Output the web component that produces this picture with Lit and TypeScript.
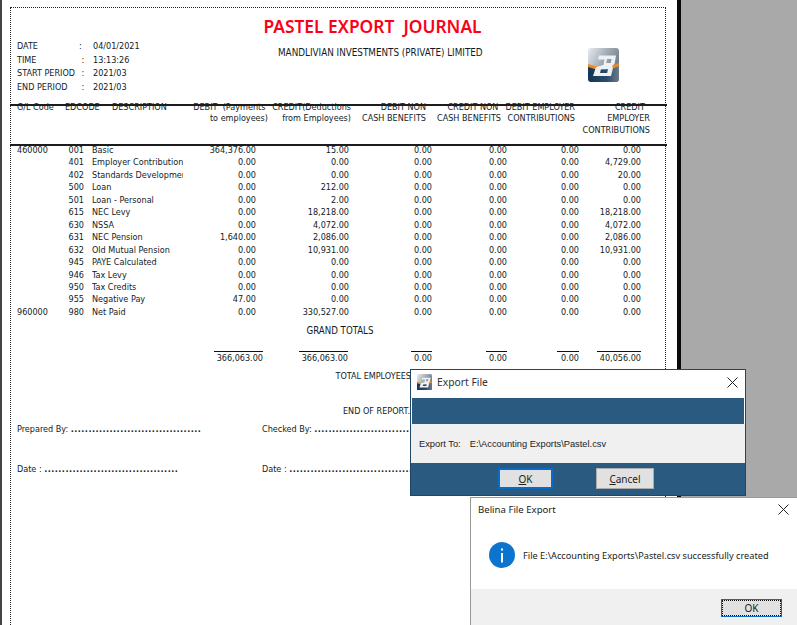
import { LitElement, html, css } from "lit";
import { customElement } from "lit/decorators.js";

type Row = [string, string, string, string, string, string, string, string, string];
const ROWS: Row[] = [
  ["460000", "001", "Basic", "364,376.00", "15.00", "0.00", "0.00", "0.00", "0.00"],
  ["", "401", "Employer Contribution", "0.00", "0.00", "0.00", "0.00", "0.00", "4,729.00"],
  ["", "402", "Standards Development Levy", "0.00", "0.00", "0.00", "0.00", "0.00", "20.00"],
  ["", "500", "Loan", "0.00", "212.00", "0.00", "0.00", "0.00", "0.00"],
  ["", "501", "Loan - Personal", "0.00", "2.00", "0.00", "0.00", "0.00", "0.00"],
  ["", "615", "NEC Levy", "0.00", "18,218.00", "0.00", "0.00", "0.00", "18,218.00"],
  ["", "630", "NSSA", "0.00", "4,072.00", "0.00", "0.00", "0.00", "4,072.00"],
  ["", "631", "NEC Pension", "1,640.00", "2,086.00", "0.00", "0.00", "0.00", "2,086.00"],
  ["", "632", "Old Mutual Pension", "0.00", "10,931.00", "0.00", "0.00", "0.00", "10,931.00"],
  ["", "945", "PAYE Calculated", "0.00", "0.00", "0.00", "0.00", "0.00", "0.00"],
  ["", "946", "Tax Levy", "0.00", "0.00", "0.00", "0.00", "0.00", "0.00"],
  ["", "950", "Tax Credits", "0.00", "0.00", "0.00", "0.00", "0.00", "0.00"],
  ["", "955", "Negative Pay", "47.00", "0.00", "0.00", "0.00", "0.00", "0.00"],
  ["960000", "980", "Net Paid", "0.00", "330,527.00", "0.00", "0.00", "0.00", "0.00"],
];
/* value, underline width, gap before it */
const TOTALS: [string, number, number][] = [
  ["366,063.00", 49, 203],
  ["366,063.00", 49, 36],
  ["0.00", 21, 63],
  ["0.00", 21, 54],
  ["0.00", 22, 50],
  ["40,056.00", 44, 18],
];

const logo = (w: number) => html`<svg width=${w} height=${w * 1.1} viewBox="0 0 31 34">
  <defs>
    <linearGradient id="lg" x1="0" y1="0" x2="1" y2="0.6">
      <stop offset="0" stop-color="#e9ecef" /><stop offset="0.5" stop-color="#a3adb7" /><stop offset="1" stop-color="#66757f" />
    </linearGradient>
    <linearGradient id="ld" x1="0" y1="0" x2="1" y2="0">
      <stop offset="0" stop-color="#163556" /><stop offset="0.6" stop-color="#2a4a68" /><stop offset="1" stop-color="#6c7c8a" />
    </linearGradient>
  </defs>
  <rect width="31" height="34" rx="3" fill="url(#lg)" />
  <path d="M0 18 Q15 24 31 17 V31 a3 3 0 0 1 -3 3 H3 a3 3 0 0 1 -3 -3Z" fill="url(#ld)" />
  <path d="M0 16 Q15 22 31 15 V18 Q15 25 0 19Z" fill="#f08a24" />
  <path fill-rule="evenodd" fill="#eef1f4" d="M11 7.5 H28 L26.5 16 L24 18 L25 20 L23 28 H5 L8 19 L15.5 17 L16.5 11.5 H10Z M19 11 H23.5 L22.8 15 H18.2Z M13 21 H20 L19.2 25 H12Z" />
</svg>`;

@customElement("app-root")
export class AppRoot extends LitElement {
  static styles = css`
    :host { display: block; width: 797px; height: 625px; overflow: hidden; position: relative; background: #a9a9a9; font-family: "DejaVu Sans Condensed", "DejaVu Sans", sans-serif; }
    .paper { box-sizing: border-box; width: 681px; height: 625px; background: #fff; border-left: 2px solid #444; border-right: 4px solid #0a0a0a; padding: 7px 0 0 8px; }
    .frame { box-sizing: border-box; width: 656px; height: 640px; border: 1px dotted #222; color: #111b27; font-size: 9px; line-height: 12px; display: flex; flex-direction: column; }
    .title { color: #fb0018; font-family: "Noto Sans", sans-serif; font-size: 17.4px; font-weight: 600; line-height: 22px; text-align: center; white-space: pre; margin: 7px 0 0 69px; }
    .top { display: grid; grid-template-columns: 240px 205px 1fr; height: 64px; padding: 3px 0 0 6px; }
    .meta { display: grid; grid-template-columns: 62px 14px 1fr; grid-auto-rows: 13.6px; white-space: pre; }
    .company { font-size: 9.8px; text-align: center; padding-top: 7px; margin-left: 21px; white-space: nowrap; }
    .logo { padding: 8px 0 0 126px; }
    .rule { height: 2px; background: #1c1c1c; width: 657px; margin-left: -1px; position: relative; z-index: 1; }
    .head { display: grid; grid-template-columns: 6px 48px 47px 60px 96px 83px 75px 75px 74px 75px; height: 42px; line-height: 11.4px; margin-top: -4px; overflow: hidden; white-space: pre; }
    .row { display: grid; grid-template-columns: 6px 43px 24px 8px 91px 73px 93px 83px 75px 72px 62px; height: 12.46px; line-height: 12.46px; white-space: nowrap; }
    .r { text-align: right; }
    .desc { overflow: hidden; }
    .body { margin-top: -2px; }
    .grand { font-size: 9.6px; text-align: center; margin-top: 7px; width: 658px; height: 26px; }
    .tot { display: flex; }
    .v { border-top: 1px solid #111; line-height: 12px; text-align: right; white-space: nowrap; }
    .employees { margin-top: 6px; padding-right: 254px; text-align: right; }
    .eor { margin-top: 23px; padding-right: 255px; text-align: right; }
    .sign { display: grid; grid-template-columns: 245px 1fr; padding-left: 6px; margin-top: 6px; white-space: nowrap; }
    .sign.second { margin-top: 28px; }
    .dots { letter-spacing: 0.45px; font-weight: 700; }
    .win { position: absolute; box-sizing: border-box; background: #fff; color: #222; }
    .export { left: 410px; top: 369px; width: 336px; height: 127px; border: 1px solid #1f4868; display: flex; flex-direction: column; }
    .tbar { display: flex; align-items: center; flex: none; }
    .export .tbar { height: 24px; padding: 0 7px 0 6px; gap: 5px; font: 10.3px "Noto Sans", sans-serif; color: #333; }
    .grow { flex: 1; }
    .band { height: 26px; margin: 4px 1px 0 1px; background: #2a5a80; flex: none; }
    .etext { height: 39px; background: #f0f0f0; display: flex; align-items: center; gap: 9px; padding-left: 8px; font: 9.3px "Liberation Sans", sans-serif; flex: none; white-space: pre; }
    .ebar { flex: 1; background: #2a5a80; display: flex; gap: 43px; padding: 5px 0 0 87px; }
    .btn { box-sizing: border-box; height: 21px; background: #e1e1e1; border: 1px solid #adadad; display: flex; align-items: center; justify-content: center; font: 10px "Noto Sans", sans-serif; color: #222; }
    .ok { width: 55px; border: 2px solid #0a6cc4; }
    .cancel { width: 58px; }
    .msg { left: 470px; top: 497px; width: 327px; height: 128px; border-left: 1px solid #999; border-top: 1px solid #999; display: flex; flex-direction: column; }
    .msg .tbar { height: 23px; padding: 0 8px 0 7px; font: 9.6px "Noto Sans", sans-serif; color: #222; }
    .mbody { height: 68px; display: flex; align-items: center; gap: 8px; padding-left: 18px; font: 9.2px "Noto Sans", sans-serif; color: #222; flex: none; }
    .mfoot { flex: 1; background: #f0f0f0; padding: 10px 0 0 250px; }
    .mok { box-sizing: border-box; width: 61px; height: 18px; background: #e1e1e1; border: 1px solid #0a6cc4; outline: 1px dotted #111; outline-offset: -2px; display: flex; align-items: center; justify-content: center; font: 10px "Noto Sans", sans-serif; color: #222; }
  `;

  private x() {
    return html`<svg width="11" height="11" viewBox="0 0 11 11"><path d="M.5.5l10 10M10.5.5l-10 10" stroke="#222" stroke-width="1" fill="none" /></svg>`;
  }

  render() {
    return html`
      <div class="paper">
        <div class="frame">
          <div class="title">PASTEL EXPORT  JOURNAL</div>
          <div class="top">
            <div class="meta">
              <span>DATE</span><span>:</span><span>04/01/2021</span>
              <span>TIME</span><span> :</span><span>13:13:26</span>
              <span>START PERIOD</span><span> :</span><span>2021/03</span>
              <span>END PERIOD</span><span> :</span><span>2021/03</span>
            </div>
            <div class="company">MANDLIVIAN INVESTMENTS (PRIVATE) LIMITED</div>
            <div class="logo">${logo(31)}</div>
          </div>
          <div class="rule"></div>
          <div class="head">
            <span></span><span>G/L Code</span><span>EDCODE</span><span>DESCRIPTION</span>
            <span class="r">DEBIT  (Payments 
to employees)</span>
            <span class="r">CREDIT(Deductions
from Employees)</span>
            <span class="r">DEBIT NON
CASH BENEFITS</span>
            <span class="r">CREDIT NON 
CASH BENEFITS</span>
            <span class="r">DEBIT EMPLOYER
CONTRIBUTIONS</span>
            <span class="r">CREDIT  
EMPLOYER
CONTRIBUTIONS</span>
          </div>
          <div class="rule"></div>
          <div class="body">
            ${ROWS.map((r) => html`<div class="row">
              <span></span><span>${r[0]}</span><span class="r">${r[1]}</span><span></span>
              <span class="desc">${r[2]}</span>
              ${r.slice(3).map((v) => html`<span class="r">${v}</span>`)}
            </div>`)}
          </div>
          <div class="grand">GRAND TOTALS</div>
          <div class="tot">
            ${TOTALS.map(([v, w, gap]) => html`<div class="v" style="width:${w}px;margin-left:${gap}px">${v}</div>`)}
          </div>
          <div class="employees">TOTAL EMPLOYEES</div>
          <div class="eor">END OF REPORT.</div>
          <div class="sign">
            <span>Prepared By: <span class="dots">.....................................</span></span>
            <span>Checked By: <span class="dots">.....................................</span></span>
          </div>
          <div class="sign second">
            <span>Date : <span class="dots">......................................</span></span>
            <span>Date : <span class="dots">......................................</span></span>
          </div>
        </div>
      </div>

      <div class="win export">
        <div class="tbar">
          ${logo(15)}
          <span>Export File</span><span class="grow"></span>${this.x()}
        </div>
        <div class="band"></div>
        <div class="etext"><span>Export To:</span><span>E:\\Accounting Exports\\Pastel.csv</span></div>
        <div class="ebar">
          <div class="btn ok"><span><u>O</u>K</span></div>
          <div class="btn cancel"><span><u>C</u>ancel</span></div>
        </div>
      </div>

      <div class="win msg">
        <div class="tbar"><span>Belina File Export</span><span class="grow"></span>${this.x()}</div>
        <div class="mbody">
          <svg width="26" height="26" viewBox="0 0 26 26"><circle cx="13" cy="13" r="13" fill="#0b74cf" /><rect x="12" y="11" width="2" height="9.5" fill="#fff" /><rect x="12" y="6.5" width="2" height="2" fill="#fff" /></svg>
          <span>File E:\\Accounting Exports\\Pastel.csv successfully created</span>
        </div>
        <div class="mfoot"><div class="mok">OK</div></div>
      </div>
    `;
  }
}
